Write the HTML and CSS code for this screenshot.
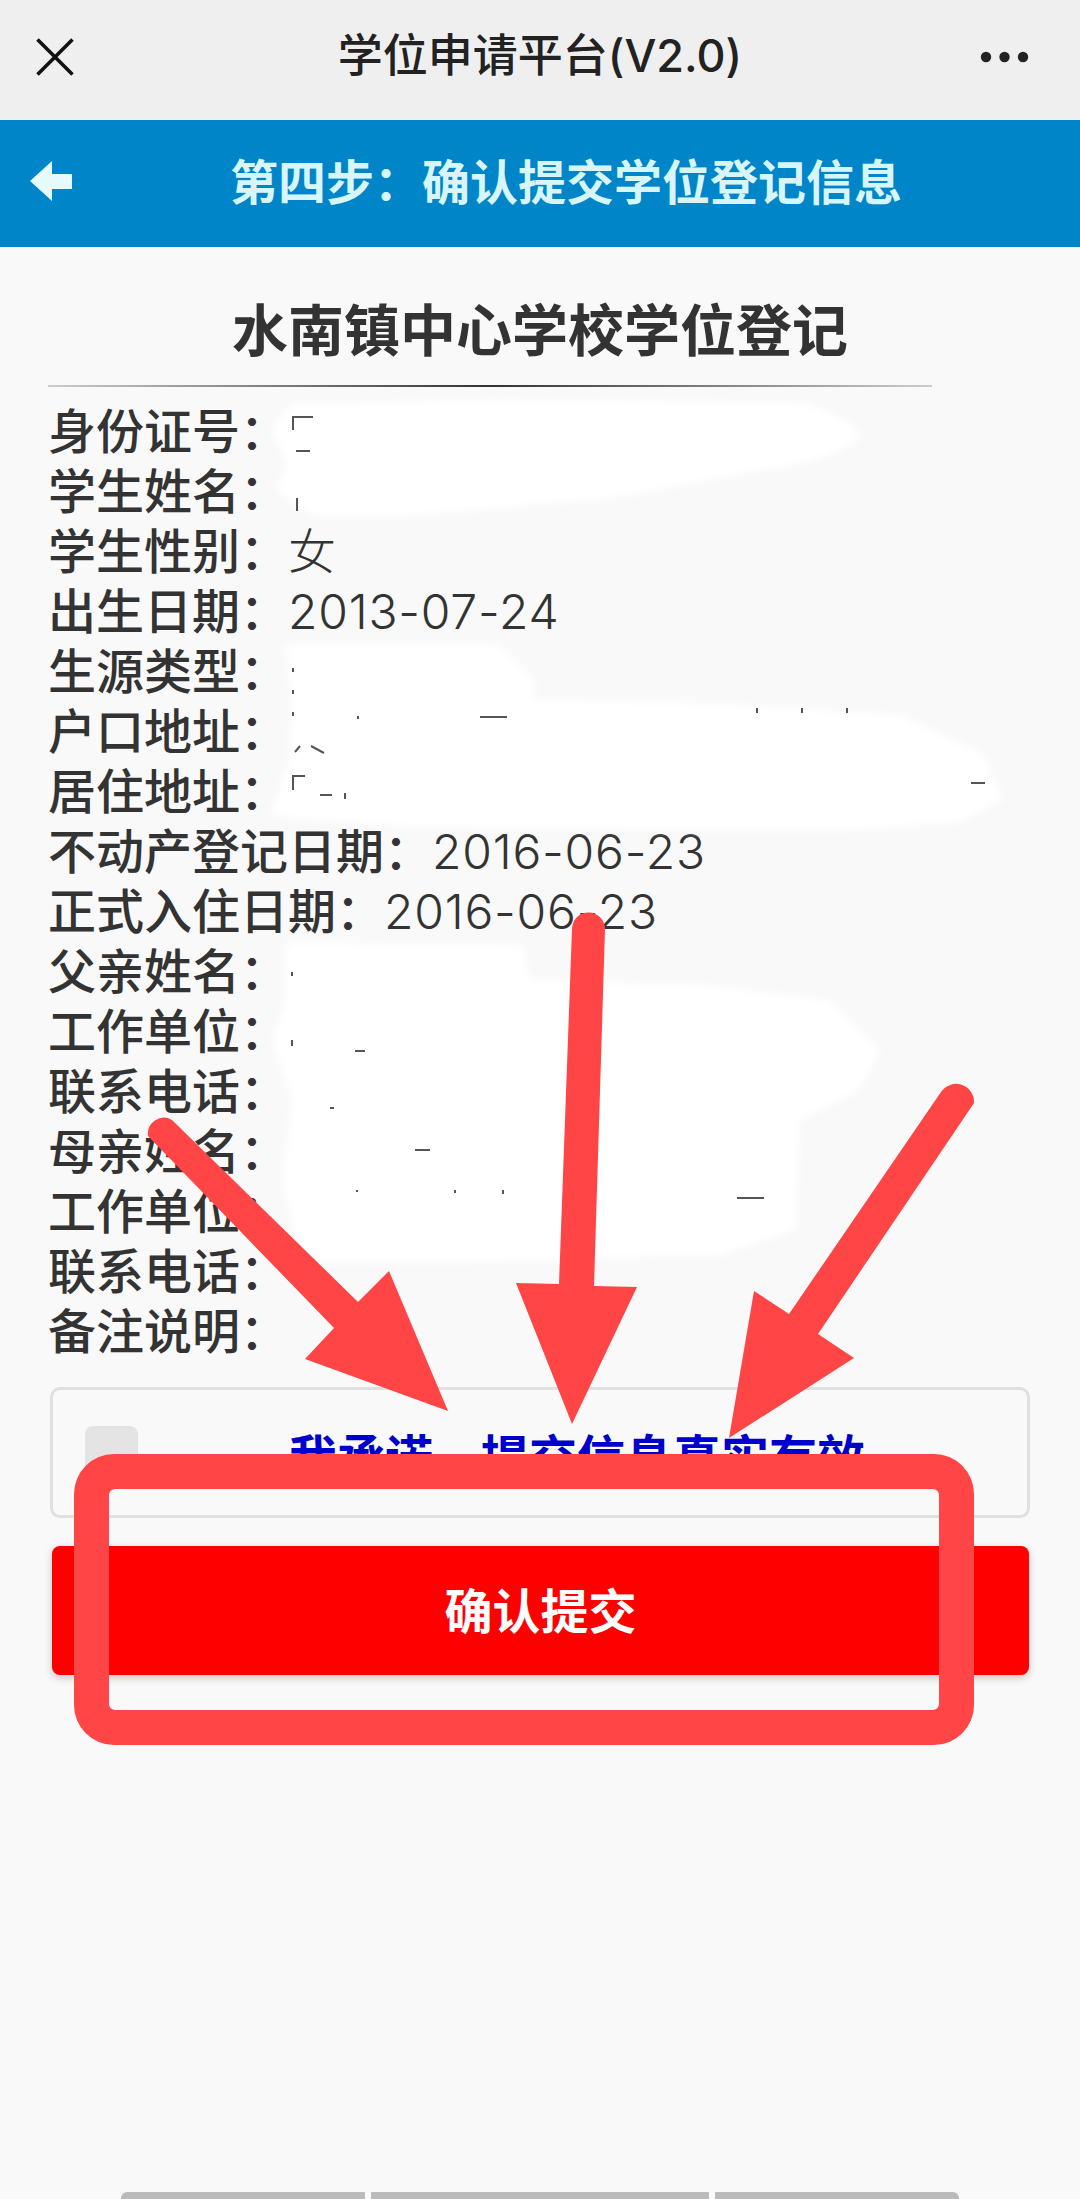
FILE: index.html
```html
<!DOCTYPE html>
<html lang="zh-CN">
<head>
<meta charset="utf-8">
<title>学位申请平台(V2.0)</title>
<link rel="stylesheet" href="styles.css">
</head>
<body>
<div class="phone">
  <header class="navbar">
    <svg class="nav-close" width="38" height="38" viewBox="0 0 38 38"><path d="M1.5 1.5 36.5 36.5M36.5 1.5 1.5 36.5"/></svg>
    <h1 class="nav-title">学位申请平台(V2.0)</h1>
    <svg class="nav-more" width="50" height="12" viewBox="0 0 50 12"><circle cx="6" cy="6" r="5.2"/><circle cx="24.500" cy="6" r="5.2"/><circle cx="43" cy="6" r="5.2"/></svg>
  </header>
  <div class="stepbar">
    <svg class="step-back" width="42" height="40" viewBox="0 0 42 40"><path d="M0 20 22 0V13H42V28H22V40Z"/></svg>
    <h2 class="step-title">第四步：确认提交学位登记信息</h2>
  </div>
  <main class="content">
    <h3 class="school">水南镇中心学校学位登记</h3>
    <hr class="rule">
    <div class="rows">
      <div class="row"><span class="label">身份证号：</span></div>
      <div class="row"><span class="label">学生姓名：</span></div>
      <div class="row"><span class="label">学生性别：</span><span class="value">女</span></div>
      <div class="row"><span class="label">出生日期：</span><span class="value value-date">2013-07-24</span></div>
      <div class="row"><span class="label">生源类型：</span></div>
      <div class="row"><span class="label">户口地址：</span></div>
      <div class="row"><span class="label">居住地址：</span></div>
      <div class="row"><span class="label">不动产登记日期：</span><span class="value value-date">2016-06-23</span></div>
      <div class="row"><span class="label">正式入住日期：</span><span class="value value-date">2016-06-23</span></div>
      <div class="row"><span class="label">父亲姓名：</span></div>
      <div class="row"><span class="label">工作单位：</span></div>
      <div class="row"><span class="label">联系电话：</span></div>
      <div class="row"><span class="label">母亲姓名：</span></div>
      <div class="row"><span class="label">工作单位：</span></div>
      <div class="row"><span class="label">联系电话：</span></div>
      <div class="row"><span class="label">备注说明：</span></div>
    </div>
    <div class="pledge">
      <span class="check"></span>
      <span class="pledge-text">我承诺，提交信息真实有效</span>
    </div>
    <button class="submit" type="button">确认提交</button>
  </main>
  <div class="toolbar">
    <span class="seg seg-start"></span>
    <span class="seg seg-mid"></span>
    <span class="seg seg-end"></span>
  </div>
  <svg class="markup" width="1080" height="2199" viewBox="0 0 1080 2199">
    <g class="blur">
      <path d="M290 405 500 399 800 403Q865 420 858 440 830 462 760 470L620 497 420 515 310 515 275 490 288 465 272 430Z"/>
      <path d="M285 645 500 645 535 680 532 700 700 703 900 715 985 755 995 785 1005 798 960 822 850 830 700 830 400 826 270 816 290 760 292 700Z"/>
      <path d="M286 942 523 945 530 980 700 985 830 1000 880 1050 860 1090 800 1120 795 1230 720 1255 470 1262 300 1262 283 1180 292 1100 272 1040 286 1000Z"/>
    </g>
    <path class="scraps" d="M293 430V417H313M296 451H310M297 498V511M293 668V672M293 690V694M293 712V716M358 716V719M480 717H507M757 708V713M802 708V713M847 708V713M295 752 300 746M311 746 324 753M293 790V776H305M320 795H332M345 793V799M971 783H985M355 1051H365M292 1040V1046M330 1108H334M292 972V976M415 1150H430M357 1190V1192M455 1190V1193M503 1190V1194M737 1198H764"/>
    <g class="ink">
      <path d="M172 1120 358 1302 389 1271 448 1411 305 1359 334 1328 148 1136A16 16 0 0 1 172 1120Z"/>
      <path d="M572 929A16.500 16.500 0 0 1 605 929L594 1286 637 1287 572 1424 516 1283 559 1284Z"/>
      <path d="M974 1103 818 1334 854 1358 729 1438 754 1291 789 1314 941 1092A18 18 0 0 1 974 1103Z"/>
      <path fill-rule="evenodd" d="M114 1454H934A40 40 0 0 1 974 1494V1705A40 40 0 0 1 934 1745H114A40 40 0 0 1 74 1705V1494A40 40 0 0 1 114 1454ZM115 1489A6 6 0 0 0 109 1495V1704A6 6 0 0 0 115 1710H933A6 6 0 0 0 939 1704V1495A6 6 0 0 0 933 1489Z"/>
    </g>
  </svg>
</div>
</body>
</html>
```

FILE: styles.css
```css
* { box-sizing: border-box; }
html, body { margin: 0; padding: 0; }
body {
  font-family: "Noto Sans CJK SC", "Liberation Sans", sans-serif;
  color: #333;
  background: #f9f9f9;
}
.phone {
  position: relative;
  width: 1080px;
  height: 2199px;
  display: flex;
  flex-direction: column;
  overflow: hidden;
}
.navbar {
  height: 120px;
  flex: none;
  background: #efefef;
  display: grid;
  grid-template-columns: 1fr auto 1fr;
  align-items: center;
  padding: 0 50px 6px 36px;
}
.nav-close path { fill: none; stroke: #111; stroke-width: 3.6; }
.nav-more { justify-self: end; fill: #222; }
.nav-title {
  margin: 0 0 3px 14px;
  font-family: "Inter", "Noto Sans CJK SC", sans-serif;
  font-size: 45px;
  line-height: 60px;
  font-weight: 500;
  color: #222;
  white-space: nowrap;
}
.stepbar {
  height: 127px;
  flex: none;
  background: #0085c8;
  display: flex;
  align-items: center;
  padding: 0 0 5px 30px;
  gap: 158px;
}
.step-back { fill: #e6fbff; flex: none; }
.step-title {
  margin: 0 0 4px;
  font-size: 48px;
  line-height: 60px;
  font-weight: 700;
  color: #d6f6fb;
  white-space: nowrap;
}
.content { padding: 50px 50px 0; flex: 1; }
.school {
  margin: 0 0 28px;
  font-size: 56px;
  line-height: 60px;
  font-weight: 700;
  color: #333;
  text-align: center;
}
.rule {
  margin: 0 98px 11px -2px;
  border: 0;
  height: 2px;
  background: linear-gradient(to right, #ccc, #333 50%, #ccc);
}
.rows { margin-left: -2px; }
.row {
  display: flex;
  height: 60px;
  font-size: 48px;
  line-height: 60px;
}
.label { font-weight: 500; color: #333; white-space: nowrap; }
.value {
  font-weight: 300;
  color: #333;
  white-space: nowrap;
}
.value-date {
  font-family: "Inter", "Noto Sans CJK SC", sans-serif;
  letter-spacing: .8px;
  padding-top: 4px;
}
.pledge {
  margin-top: 29px;
  height: 131px;
  border: 3px solid #e0e0e0;
  border-radius: 10px;
  display: flex;
  align-items: flex-start;
  padding: 36px 0 0 32px;
}
.check {
  width: 53px;
  height: 53px;
  flex: none;
  background: #e4e4e4;
  border-radius: 8px;
}
.pledge-text {
  margin-left: 151px;
  font-size: 48px;
  line-height: 56px;
  font-weight: 700;
  color: #0000cc;
  white-space: nowrap;
}
.submit {
  display: block;
  width: 977px;
  height: 129px;
  margin: 28px 0 0 2px;
  padding: 0 0 6px;
  border: 0;
  border-radius: 8px;
  background: #f00;
  color: #fff;
  font-family: inherit;
  font-size: 48px;
  font-weight: 700;
  box-shadow: 0 3px 8px rgba(0, 0, 0, .2);
}
.toolbar {
  height: 7px;
  flex: none;
  display: flex;
  justify-content: center;
  gap: 6px;
  background: #fafafa;
}
.seg { background: #bbb; height: 7px; }
.seg-start { width: 244px; border-top-left-radius: 6px; }
.seg-mid { width: 338px; }
.seg-end { width: 244px; border-top-right-radius: 6px; }
.markup { position: absolute; left: 0; top: 0; pointer-events: none; }
.blur { filter: blur(4px); }
.blur path { fill: #fff; }
.scraps { fill: none; stroke: #555; stroke-width: 2; }
.ink path { fill: #ff4545; }
```
